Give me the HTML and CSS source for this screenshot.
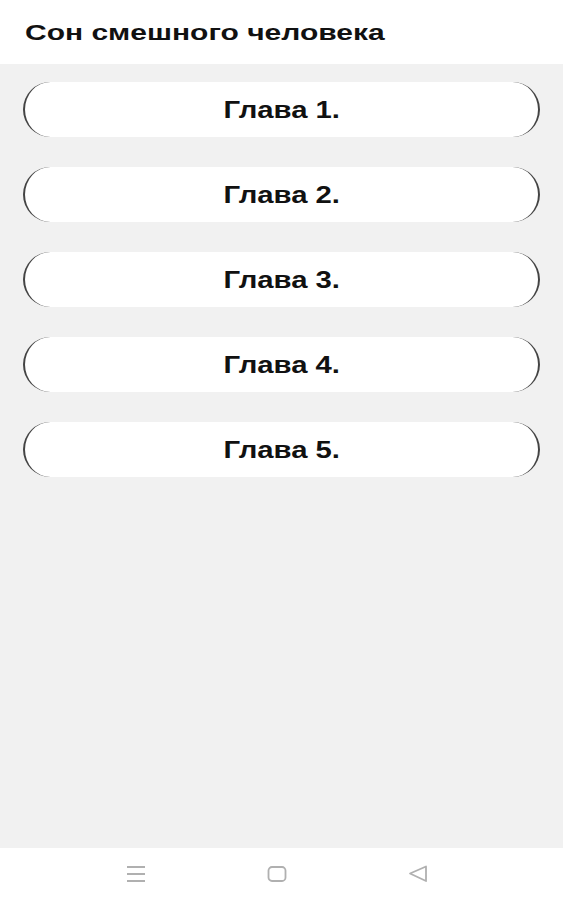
FILE: index.html
```html
<!DOCTYPE html>
<html lang="ru">
<head>
  <meta charset="UTF-8">
  <meta name="viewport" content="width=device-width, initial-scale=1">
  <title>Сон смешного человека</title>
  <link rel="stylesheet" href="styles.css">
</head>
<body>

  <header class="topbar">
    <h1>Сон смешного человека</h1>
  </header>

  <main class="chapters">
    <button class="chapter"><span>Глава 1.</span></button>
    <button class="chapter"><span>Глава 2.</span></button>
    <button class="chapter"><span>Глава 3.</span></button>
    <button class="chapter"><span>Глава 4.</span></button>
    <button class="chapter"><span>Глава 5.</span></button>
  </main>

  <nav class="navbar">
    <svg width="20" height="18" viewBox="0 0 20 18">
      <path d="M1 2h18M1 9h18M1 16h18" stroke="#b0b0b0" stroke-width="2" fill="none"/>
    </svg>
    <svg width="20" height="18" viewBox="0 0 20 18">
      <rect x="1.5" y="2" width="17" height="14" rx="3.5" stroke="#b0b0b0" stroke-width="1.8" fill="none"/>
    </svg>
    <svg width="20" height="18" viewBox="0 0 20 18">
      <path d="M18 1.5L2 8.5l16 7.5z" stroke="#b0b0b0" stroke-width="1.8" stroke-linejoin="round" fill="none"/>
    </svg>
  </nav>

</body>
</html>
```

FILE: styles.css
```css
html, body {
  height: 100%;
}
body {
  margin: 0;
  font-family: "Liberation Sans", Arial, sans-serif;
  background-color: #f1f1f1;
  display: flex;
  flex-direction: column;
}
.topbar {
  background: white;
  height: 64px;
  flex-shrink: 0;
  display: flex;
  align-items: center;
  padding: 0 25px;
  box-sizing: border-box;
}
.topbar h1 {
  margin: 2px 0 0;
  font-size: 21.5px;
  font-weight: bold;
  color: #111;
  transform: scaleX(1.395);
  transform-origin: left center;
}
.chapters {
  flex: 1;
  display: flex;
  flex-direction: column;
  gap: 30px;
  padding: 18px 23px 0;
}
.chapter {
  height: 55px;
  background: white;
  border: none;
  border-left: 2px solid #444;
  border-right: 2px solid #444;
  border-radius: 28px;
  font-family: "Liberation Sans", Arial, sans-serif;
  font-size: 24px;
  font-weight: bold;
  color: #111;
  cursor: pointer;
}
.chapter span {
  display: inline-block;
  transform: scaleX(1.22);
}
.navbar {
  background: white;
  height: 52px;
  flex-shrink: 0;
  box-sizing: border-box;
  display: flex;
  justify-content: center;
  align-items: center;
  gap: 121px;
  padding: 0 9px 0 0;
}
```
